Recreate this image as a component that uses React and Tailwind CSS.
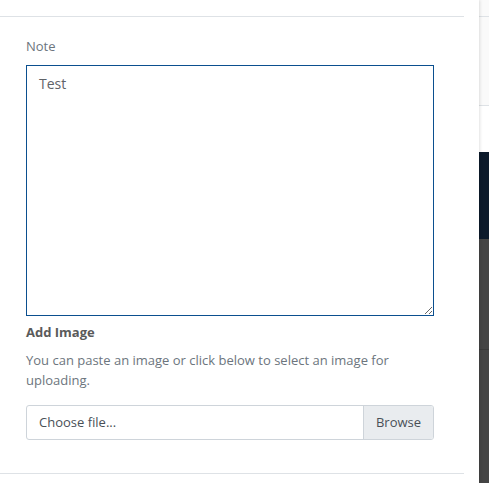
export default function App() {
  return (
    <div className="flex h-[483px] w-[489px] overflow-hidden bg-white" style={{ fontFamily: '"Open Sans", sans-serif' }}>
      <div className="relative flex w-[479px] shrink-0 flex-col bg-white shadow-[1px_0_3px_rgba(0,0,0,0.12)] z-10">
        <div className="w-[464px]">
          <div className="h-[17px] border-b border-[#dee2e6]" />
          <div className="px-[26px] pt-[19px]">
            <div className="text-[13px] leading-[20px] text-[#6c757d]">Note</div>
            <textarea
              className="mt-[9px] block h-[251px] w-[408px] resize-y border border-[#0b4f8f] pl-[12px] pr-[12px] pt-[8px] pb-[7px] text-[14px] leading-[20px] text-[#5f6368] outline-none"
              defaultValue="Test"
            />
            <div className="mt-[6px] text-[13px] font-bold leading-[20px] text-[#5a5a5a]">Add Image</div>
            <p className="mt-[8px] text-[13px] leading-[20px] text-[#6c757d]">
              You can paste an image or click below to select an image for uploading.
            </p>
            <div className="mt-[15px] flex h-[35px] w-[408px] overflow-hidden rounded-[3px] border border-[#ced4da] text-[13px] text-[#495057]">
              <div className="flex flex-1 items-center px-[12px]">Choose file...</div>
              <div className="flex w-[70px] items-center justify-center border-l border-[#ced4da] bg-[#e9ecef]">Browse</div>
            </div>
          </div>
          <div className="mt-[33px] border-b border-[#dee2e6]" />
        </div>
      </div>
      <div className="flex flex-1 flex-col">
        <div className="h-[17px] border-b border-[#dee2e6] bg-[#fafafa]" />
        <div className="h-[89px] border-b border-[#dee2e6] bg-[#fafafa]" />
        <div className="h-[46px] bg-white" />
        <div className="h-[87px] bg-[#0c1a2b]" />
        <div className="h-[111px] border-b border-[#3a3a3a] bg-[#444444]" />
        <div className="flex-1 bg-[#444444]" />
      </div>
    </div>
  );
}
